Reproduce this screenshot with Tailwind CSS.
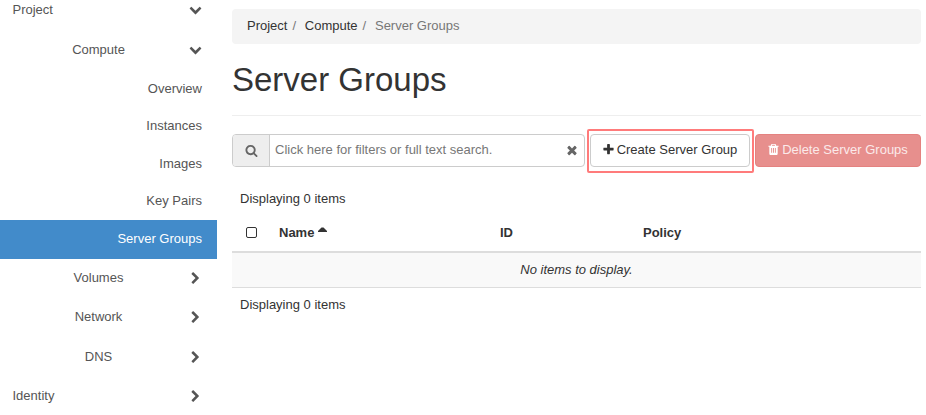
<!DOCTYPE html>
<html lang="en">
<head>
<meta charset="utf-8">
<title>Server Groups</title>
<script src="https://cdn.jsdelivr.net/npm/@tailwindcss/browser@4"></script>
</head>
<body class="bg-white">
<svg class="hidden">
  <symbol id="down" viewBox="0 0 1792 1792"><path d="M1683 808l-742 741q-19 19-45 19t-45-19l-742-741q-19-19-19-45.500t19-45.500l166-165q19-19 45-19t45 19l531 531 531-531q19-19 45-19t45 19l166 165q19 19 19 45.500t-19 45.500z"/></symbol>
  <symbol id="right" viewBox="0 0 1792 1792"><path d="M1363 877l-742 742q-19 19-45 19t-45-19l-166-166q-19-19-19-45t19-45l531-531-531-531q-19-19-19-45t19-45l166-166q19-19 45-19t45 19l742 742q19 19 19 45t-19 45z"/></symbol>
  <symbol id="search" viewBox="0 0 1792 1792"><path d="M1216 832q0-185-131.500-316.500t-316.500-131.500-316.500 131.500-131.500 316.500 131.500 316.500 316.500 131.500 316.500-131.500 131.500-316.500zm512 832q0 52-38 90t-90 38q-54 0-90-38l-343-342q-179 124-399 124-143 0-273.500-55.500t-225-150-150-225-55.500-273.500 55.500-273.500 150-225 225-150 273.500-55.500 273.500 55.500 225 150 150 225 55.500 273.500q0 220-124 399l343 343q37 37 37 90z"/></symbol>
  <symbol id="times" viewBox="0 0 1792 1792"><path d="M1490 1322q0 40-28 68l-136 136q-28 28-68 28t-68-28l-294-294-294 294q-28 28-68 28t-68-28l-136-136q-28-28-28-68t28-68l294-294-294-294q-28-28-28-68t28-68l136-136q28-28 68-28t68 28l294 294 294-294q28-28 68-28t68 28l136 136q28 28 28 68t-28 68l-294 294 294 294q28 28 28 68z"/></symbol>
  <symbol id="plus" viewBox="0 0 1792 1792"><path d="M1600 736v192q0 40-28 68t-68 28h-416v416q0 40-28 68t-68 28h-192q-40 0-68-28t-28-68v-416h-416q-40 0-68-28t-28-68v-192q0-40 28-68t68-28h416v-416q0-40 28-68t68-28h192q40 0 68 28t28 68v416h416q40 0 68 28t28 68z"/></symbol>
  <symbol id="trash" viewBox="0 0 1792 1792"><path fill-rule="evenodd" d="M192 384h320l70-167q15-37 54-63t79-26h362q40 0 79 26t54 63l70 167h320v128h-128v948q0 83-47 143.500t-113 60.500H480q-66 0-113-58.500T320 1464V512H192zM672 384h448l-48-117-17-11H738l-17 11zM576 704v640h128V704zM832 704v640h128V704zM1088 704v640h128V704z"/></symbol>
</svg>
<div class="flex h-[415px] w-[926px] overflow-hidden font-['Liberation_Sans',Arial,sans-serif] text-[13px] leading-[19px] text-[#333]">
  <nav class="flex w-[217px] shrink-0 flex-col text-[#555]">
    <a class="mb-[10px] flex h-5 items-center justify-between pr-[15px] pb-[2px] pl-[12.500px]">Project<svg class="size-[13px] fill-current"><use href="#down"/></svg></a>
    <a class="flex h-10 items-center pr-[15px] pb-[2px] pl-[8px]"><span class="flex-1 text-center">Compute</span><svg class="size-[13px] fill-current"><use href="#down"/></svg></a>
    <a class="flex h-[38px] items-center justify-end pr-[15px] pb-[2px]">Overview</a>
    <a class="flex h-[37px] items-center justify-end pr-[15px] pb-[2px]">Instances</a>
    <a class="flex h-[38px] items-center justify-end pr-[15px] pb-[2px]">Images</a>
    <a class="flex h-[37px] items-center justify-end pr-[15px] pb-[2px]">Key Pairs</a>
    <a class="flex h-[39px] items-center justify-end bg-[#428bca] pr-[15px] pb-[2px] text-white">Server Groups</a>
    <a class="flex h-[39px] items-center pr-[15px] pl-[8px]"><span class="flex-1 pb-[2px] text-center">Volumes</span><svg class="size-[13px] fill-current"><use href="#right"/></svg></a>
    <a class="flex h-[39px] items-center pr-[15px] pl-[8px]"><span class="flex-1 pb-[2px] text-center">Network</span><svg class="size-[13px] fill-current"><use href="#right"/></svg></a>
    <a class="flex h-10 items-center pr-[15px] pl-[8px]"><span class="flex-1 pb-[2px] text-center">DNS</span><svg class="size-[13px] fill-current"><use href="#right"/></svg></a>
    <a class="flex h-[38px] items-center justify-between pr-[15px] pl-[12.500px]"><span class="pb-[2px]">Identity</span><svg class="size-[13px] fill-current"><use href="#right"/></svg></a>
  </nav>
  <main class="ml-[15px] flex w-[689px] flex-col">
    <div class="mt-[9px] flex h-[35px] shrink-0 items-center rounded bg-[#f4f4f4] px-[15px] pb-[2px] text-[#777]">
      <span class="text-[#333]">Project</span><span class="pr-[8.750px] pl-[5px]">/</span><span class="text-[#333]">Compute</span><span class="pr-[8.750px] pl-[5px]">/</span><span>Server Groups</span>
    </div>
    <h1 class="mt-[17px] h-[55px] border-b border-[#eee] pt-px text-[33px] leading-[36px]">Server Groups</h1>
    <div class="mt-[18px] flex h-[33px] gap-[5px]">
      <div class="flex w-[353px] items-center overflow-hidden rounded border border-[#ccc]">
        <span class="flex h-full w-[37px] items-center justify-center border-r border-[#ccc] bg-[#eee]"><svg class="size-[13px] fill-[#666]"><use href="#search"/></svg></span>
        <span class="flex-1 pb-[2px] pl-[5px] text-[#777]">Click here for filters or full text search.</span>
        <svg class="mr-[5px] mb-px size-[14px] fill-[#666]"><use href="#times"/></svg>
      </div>
      <button class="relative flex w-[160px] items-center justify-center rounded border border-[#ccc] pr-px pb-[3px]"><svg class="mr-[2px] size-[13px] fill-current"><use href="#plus"/></svg>Create Server Group<span class="absolute -top-[6px] -right-[5px] -bottom-[7px] -left-[4px] rounded-[2px] border-2 border-[#ff7b7b]"></span></button>
      <button class="flex w-[166px] items-center justify-center rounded border border-[#e48280] bg-[#e78f8d] pr-px pb-[3px] text-[#fbeaea]"><svg class="mr-[2px] size-[13px] fill-white"><use href="#trash"/></svg>Delete Server Groups</button>
    </div>
    <div class="mt-[22px] h-[27px] pl-2">Displaying 0 items</div>
    <div class="flex h-[37px] items-center border-b-2 border-[#ddd] pb-[2px] font-bold">
      <span class="flex w-[47px] pl-[14px]"><input type="checkbox" class="size-[11px] appearance-none rounded-[2px] border border-[#333]"></span>
      <span class="flex w-[221px]">Name<svg class="mt-[4px] ml-[4px] h-[5px] w-[9px] fill-current" viewBox="0 0 9 5"><path d="M0 5V4L3.500 0.500H5.500L9 4V5Z"/></svg></span>
      <span class="w-[143px]">ID</span><span>Policy</span>
    </div>
    <div class="flex h-[35px] items-center justify-center border-b border-[#ddd] bg-[#f9f9f9] pb-[2px] italic">No items to display.</div>
    <div class="mt-[7px] pl-2">Displaying 0 items</div>
  </main>
</div>
</body>
</html>
